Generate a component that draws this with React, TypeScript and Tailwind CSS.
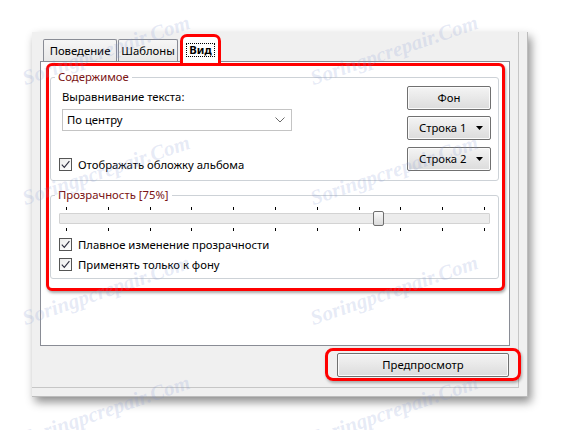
import type { ReactNode } from "react";

const WATERMARKS = [
  "left-[27px] top-[66px]",
  "left-[315px] top-[66px]",
  "left-[27px] top-[186px]",
  "left-[315px] top-[186px]",
  "left-[27px] top-[306px]",
  "left-[315px] top-[306px]",
  "left-[27px] top-[426px]",
  "left-[315px] top-[426px]",
];

function CheckBox({ label }: { label: string }) {
  return (
    <div className="flex h-[13px] items-center gap-[6px]">
      <span className="flex h-[13px] w-[13px] shrink-0 items-center justify-center border border-[#555] bg-gradient-to-br from-[#ececec] to-white">
        <svg viewBox="0 0 11 11" className="h-[11px] w-[11px]">
          <path d="M1.8 5.6 L4.3 8.3 L9.4 2.2" fill="none" stroke="#2e2e3e" strokeWidth="1.1" />
        </svg>
      </span>
      <span className="whitespace-nowrap leading-[16px]">{label}</span>
    </div>
  );
}

function WinButton({ children, className = "" }: { children: ReactNode; className?: string }) {
  return (
    <div
      className={`flex h-[24px] items-center rounded-[2px] border border-[#707070] bg-gradient-to-b from-[#f4f4f4] to-[#dcdcdc] shadow-[inset_0_0_0_1px_#fbfbfb] ${className}`}
    >
      {children}
    </div>
  );
}

function DropButton({ label }: { label: string }) {
  return (
    <WinButton className="pl-[11px] pr-[7px]">
      <span className="flex-1 leading-[16px]">{label}</span>
      <svg viewBox="0 0 7 4" className="h-[4px] w-[7px]">
        <path d="M0 0 H7 L3.5 4 Z" fill="#000" />
      </svg>
    </WinButton>
  );
}

export default function App() {
  return (
    <div className="relative h-[430px] w-[561px] overflow-hidden bg-white pl-[32px] pt-[32px] font-['Noto_Sans',sans-serif] text-[11.3px] text-black">
      <div className="h-[365px] w-[496px] border-r border-b border-[#bcbcbc] bg-[#f0f0f0] shadow-[3px_5px_9px_rgba(0,0,0,0.45)]">
        <div className="h-[356px] w-[487px] border-r border-b border-[#c6c6c6] pt-[4px]">
          {/* tabs */}
          <div className="flex h-[25px] items-end pl-[11px]">
            <div className="flex h-[22px] w-[74px] items-center justify-center rounded-t-[2px] border border-b-0 border-[#898c95] bg-gradient-to-b from-[#f6f6f6] to-[#e8e8e8] leading-[16px]">
              Поведение
            </div>
            <div className="ml-[1px] flex h-[22px] w-[60px] items-center justify-center rounded-t-[2px] border border-b-0 border-[#898c95] bg-gradient-to-b from-[#f6f6f6] to-[#e8e8e8] leading-[16px]">
              Шаблоны
            </div>
            <div className="relative z-10 -mb-[1px] ml-[4px] flex h-[26px] w-[37px] items-center justify-center rounded-t-[2px] border border-b-0 border-[#898c95] bg-white">
              <span className="border border-dotted border-black px-[2px] font-bold leading-[12px]">Вид</span>
              <span className="absolute -left-[3px] -right-[3px] -top-[3px] h-[31px] rounded-t-[7px] border-[3px] border-b-0 border-[#ff0000]" />
            </div>
          </div>

          {/* tab panel */}
          <div className="ml-[8px] h-[285px] w-[470px] border border-[#898c95] bg-white pl-[5px] pt-[1px]">
            <div className="h-[228px] w-[459px] rounded-[6px] border-[3px] border-[#ff0000] bg-white pl-[1px] pt-[3px] shadow-[1px_2px_3px_rgba(0,0,0,0.35)]">
              <fieldset className="h-[112px] w-[449px] rounded-[3px] border border-[#cdd2d7]">
                <legend className="ml-[4px] px-[3px] leading-[16px] text-[#7b1414]">Содержимое</legend>
                <div className="flex">
                  <div className="ml-[8px] flex w-[236px] flex-col">
                    <div className="ml-[3px] mt-[4px] leading-[16px]">Выравнивание текста:</div>
                    <div className="ml-[3px] mt-[4px] flex h-[22px] w-[230px] items-center justify-between border border-[#c4c4c4] bg-white pl-[4px] pr-[6px]">
                      <span className="leading-[16px]">По центру</span>
                      <svg viewBox="0 0 10 6" className="h-[6px] w-[10px]">
                        <path d="M0.5 0.5 L5 5 L9.5 0.5" fill="none" stroke="#6a6a6a" strokeWidth="1" />
                      </svg>
                    </div>
                    <div className="mt-[27px]">
                      <CheckBox label="Отображать обложку альбома" />
                    </div>
                  </div>
                  <div className="ml-auto mr-[7px] flex w-[84px] flex-col">
                    <WinButton className="mt-[1px] justify-center">
                      <span className="leading-[16px]">Фон</span>
                    </WinButton>
                    <div className="mt-[6px]">
                      <DropButton label="Строка 1" />
                    </div>
                    <div className="mt-[7px]">
                      <DropButton label="Строка 2" />
                    </div>
                  </div>
                </div>
              </fieldset>

              <fieldset className="mt-[6px] h-[92px] w-[449px] rounded-[3px] border border-[#cdd2d7]">
                <legend className="ml-[4px] px-[3px] leading-[16px] text-[#7b1414]">Прозрачность [75%]</legend>
                <div className="relative mx-[8px] mt-[4px]">
                  <div className="flex h-[3px] justify-between pl-[7px] pr-[5px]">
                    {Array.from({ length: 11 }).map((_, i) => (
                      <span key={i} className="h-[3px] w-px bg-black" />
                    ))}
                  </div>
                  <div className="mt-[3px] h-[11px] rounded-[1px] border border-[#d3d3d3] bg-[#ececec]" />
                  <div className="mt-[4px] flex h-[3px] justify-between pl-[7px] pr-[5px]">
                    {Array.from({ length: 11 }).map((_, i) => (
                      <span key={i} className="h-[3px] w-px bg-black" />
                    ))}
                  </div>
                  <span className="absolute left-[314px] top-[4px] h-[15px] w-[11px] rounded-[2px] border border-[#6f6f6f] bg-gradient-to-b from-[#fafafa] to-[#dadada]" />
                </div>
                <div className="ml-[8px] mt-[7px]">
                  <CheckBox label="Плавное изменение прозрачности" />
                </div>
                <div className="ml-[8px] mt-[7px]">
                  <CheckBox label="Применять только к фону" />
                </div>
              </fieldset>
            </div>
          </div>

          {/* bottom bar */}
          <div className="mt-[7px] flex justify-end pr-[9px]">
            <div className="relative">
              <WinButton className="w-[172px] justify-center">
                <span className="leading-[16px]">Предпросмотр</span>
              </WinButton>
              <span className="absolute -bottom-[4px] -left-[12px] -right-[12px] -top-[5px] rounded-[8px] border-[3px] border-[#ff0000] shadow-[1px_2px_3px_rgba(0,0,0,0.3)]" />
            </div>
          </div>
        </div>
      </div>

      {WATERMARKS.map((pos) => (
        <span
          key={pos}
          className={`pointer-events-none absolute ${pos} origin-bottom-left -rotate-[19deg] whitespace-nowrap font-['Liberation_Serif',serif] text-[21px] font-bold italic leading-[24px] text-[rgba(130,150,210,0.2)]`}
        >
          Soringpcrepair.Com
        </span>
      ))}
    </div>
  );
}
